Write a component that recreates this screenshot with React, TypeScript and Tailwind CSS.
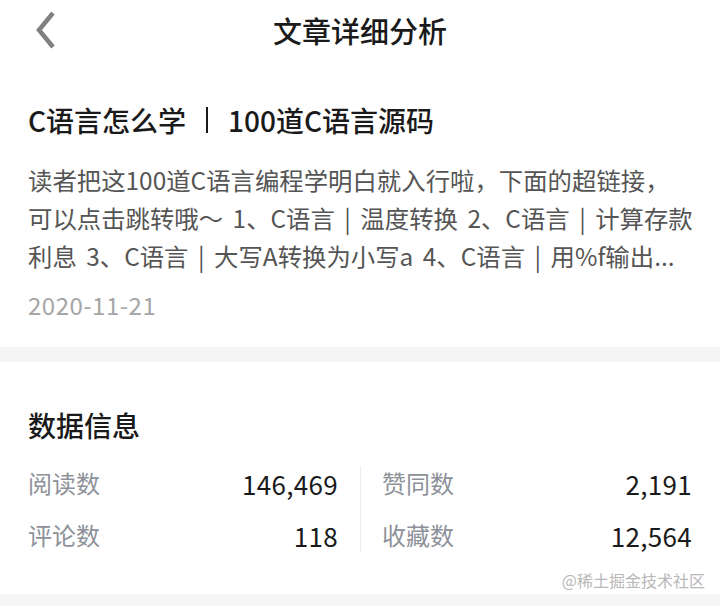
const font = { fontFamily: '"Noto Sans CJK SC", "Noto Sans", sans-serif' };

const stats: [string, string][][] = [
  [
    ["阅读数", "146,469"],
    ["评论数", "118"],
  ],
  [
    ["赞同数", "2,191"],
    ["收藏数", "12,564"],
  ],
];

function StatColumn({ rows, className }: { rows: [string, string][]; className: string }) {
  return (
    <div className={`flex-1 ${className}`}>
      {rows.map(([label, value]) => (
        <div key={label} className="flex h-[52px] items-center justify-between">
          <span className="text-[24px] text-[#8d9199]">{label}</span>
          <span className="text-[26px] tracking-[0.3px] text-[#1a1a1a]">{value}</span>
        </div>
      ))}
    </div>
  );
}

export default function App() {
  return (
    <div className="h-[606px] w-[720px] overflow-hidden bg-white" style={font}>
      <header className="relative flex h-[60px] items-center justify-center">
        <svg
          className="absolute left-[34px] top-[10px]"
          width="24"
          height="40"
          viewBox="0 0 24 40"
          fill="none"
        >
          <path d="M19 3 L5 20 L19 37" stroke="#808080" strokeWidth="4.5" strokeLinejoin="miter" />
        </svg>
        <h1 className="text-[29px] leading-[40px] font-medium text-[#1a1a1a]">文章详细分析</h1>
      </header>

      <section className="px-[28px] pt-[40px] pb-[27px]">
        <h2 className="flex items-center whitespace-nowrap text-[28px] leading-[40px] font-medium text-[#1a1a1a]">
          <span>C语言怎么学</span>
          <span className="mx-[20px] h-[26px] w-[2px] bg-[#1a1a1a]" />
          <span>100道C语言源码</span>
        </h2>
        <div className="mt-[21px] whitespace-nowrap text-[24.4px] leading-[38px] text-[#555555] [word-spacing:4px]">
          <div>读者把这100道C语言编程学明白就入行啦，下面的超链接，</div>
          <div>可以点击跳转哦～ 1、C语言 | 温度转换 2、C语言 | 计算存款</div>
          <div>利息 3、C语言 | 大写A转换为小写a 4、C语言 | 用%f输出...</div>
        </div>
        <div className="mt-[15px] text-[24px] leading-[30px] tracking-[0.5px] text-[#a6a6a6]">2020-11-21</div>
      </section>

      <div className="h-[15px] bg-[#f5f5f5]" />

      <section className="pt-[43px]">
        <h2 className="px-[28px] text-[28px] leading-[40px] font-medium text-[#1a1a1a]">数据信息</h2>
        <div className="mt-[12px] flex items-center">
          <StatColumn rows={stats[0]} className="pl-[28px] pr-[22px]" />
          <div className="h-[87px] w-px bg-[#ececec]" />
          <StatColumn rows={stats[1]} className="pl-[21px] pr-[28px]" />
        </div>
        <div className="mt-[9px] pr-[15px] pb-[4px] text-right text-[16px] leading-[20px] text-[#b8b8b8]">
          @稀土掘金技术社区
        </div>
      </section>

      <div className="h-[12px] bg-[#f5f5f5]" />
    </div>
  );
}
